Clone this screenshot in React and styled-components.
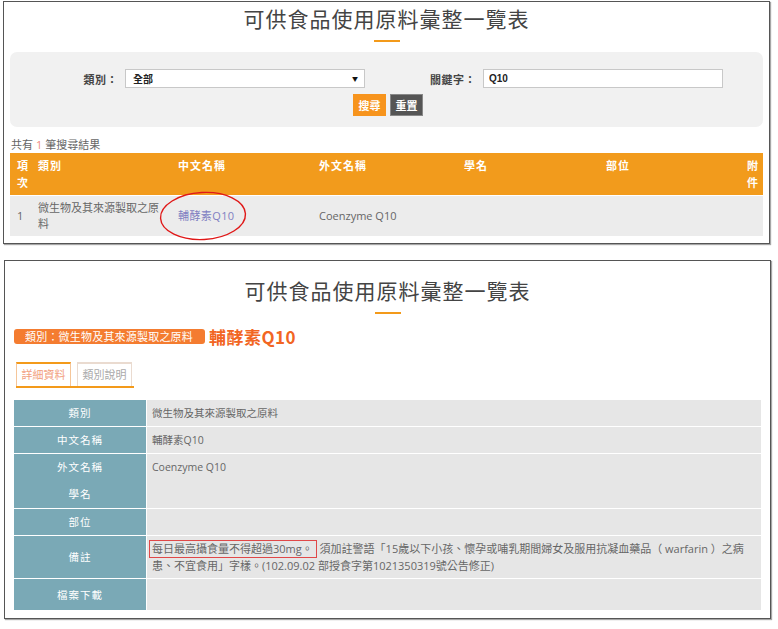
import React from "react";
import styled, { createGlobalStyle } from "styled-components";

const GlobalStyle = createGlobalStyle`
  body {
    margin: 0;
    background: #fff;
    font-family: "Open Sans", "Noto Sans CJK TC", sans-serif;
  }
`;

const Page = styled.div`
  display: flex;
  flex-direction: column;
  gap: 16px;
  padding: 1px 7px 8px 3px;
`;

const Panel = styled.div`
  width: 767px;
  box-sizing: border-box;
  border: 1px solid #555;
  box-shadow: 1px 1px 1px rgba(0, 0, 0, 0.35);
  background: #fff;
  margin-left: ${(p) => p.$shift || 0}px;
  padding: ${(p) => p.$pad};
`;

const Title = styled.h1`
  margin: 0;
  height: 30px;
  line-height: 30px;
  text-align: center;
  font-family: "Noto Sans CJK TC", sans-serif;
  font-weight: 400;
  font-size: 21px;
  letter-spacing: 1px;
  color: #444;
`;

const TitleBar = styled.div`
  width: 26px;
  height: 2px;
  background: #f39a1a;
  margin: 7px auto 0;
`;

const SearchBox = styled.div`
  margin-top: 10px;
  height: 75px;
  box-sizing: border-box;
  background: #f1f1f1;
  border-radius: 7px;
  padding-top: 17px;
`;

const FieldGrid = styled.div`
  display: grid;
  grid-template-columns: 115px 240px 118px 240px;
  align-items: center;
`;

const Label = styled.label`
  text-align: right;
  padding-right: 7px;
  font-size: 11px;
  font-weight: bold;
  color: #444;
  letter-spacing: 0.5px;
`;

const FakeSelect = styled.div`
  height: 19px;
  box-sizing: border-box;
  display: flex;
  align-items: center;
  justify-content: space-between;
  padding: 0 6px 0 7px;
  background: #fff;
  border: 1px solid #c8c8c8;
  font-size: 10px;
  font-weight: bold;
  color: #222;
`;

const Arrow = styled.span`
  font-size: 6px;
  color: #111;
`;

const TextInput = styled.input`
  height: 19px;
  box-sizing: border-box;
  border: 1px solid #c8c8c8;
  padding: 0 5px;
  font-family: "Liberation Sans", sans-serif;
  font-size: 10px;
  font-weight: bold;
  color: #222;
  outline: none;
`;

const ButtonRow = styled.div`
  display: flex;
  justify-content: center;
  gap: 4px;
  margin-top: 6px;
  padding-left: 3px;
`;

const Btn = styled.button`
  width: 33px;
  height: 22px;
  padding: 0;
  border: 1px solid ${(p) => (p.$dark ? "#888" : "#f7941d")};
  background: ${(p) => (p.$dark ? "#555" : "#f7941d")};
  color: #fff;
  font-family: "Noto Sans CJK TC", sans-serif;
  font-size: 11px;
  font-weight: bold;
`;

const ResultCount = styled.div`
  margin-top: 11px;
  height: 14px;
  line-height: 14px;
  font-size: 11px;
  color: #666;
  padding-left: 1px;

  b {
    font-weight: normal;
    color: #f08a80;
    margin: 0 3px;
  }
`;

const ResultTable = styled.table`
  margin-top: 1px;
  width: 100%;
  table-layout: fixed;
  border-collapse: collapse;
  font-size: 11px;

  th {
    background: #f29b1c;
    color: #fff;
    font-weight: bold;
    text-align: left;
    vertical-align: top;
    padding: 4px 7px;
    line-height: 17px;
    letter-spacing: 1px;
  }

  th:last-child {
    text-align: right;
  }

  td {
    background: #ececec;
    color: #666;
    vertical-align: middle;
    padding: 4px 7px;
    line-height: 16px;
    border-top: 1px solid #fff;
    height: 32px;
  }
`;

const LinkCell = styled.td`
  position: relative;
`;

const Link = styled.a`
  color: #7f7fc2;
  text-decoration: none;
  letter-spacing: 0.4px;
`;

const Ellipse = styled.svg`
  position: absolute;
  left: -12px;
  top: -6px;
  overflow: visible;
`;

const CategoryRow = styled.div`
  display: flex;
  align-items: center;
  gap: 4px;
  margin-top: 10px;
  height: 24px;
`;

const Badge = styled.span`
  background: #f47c30;
  color: #fff;
  border-radius: 3px;
  font-size: 11px;
  line-height: 15px;
  padding: 0 12px 0 11px;
  letter-spacing: 0.2px;
`;

const ItemName = styled.span`
  color: #f26522;
  font-size: 17px;
  font-weight: bold;
  font-family: "Noto Sans CJK TC", sans-serif;
  letter-spacing: 0.5px;
`;

const Tabs = styled.div`
  display: flex;
  gap: 6px;
  width: 118px;
  margin: 14px 0 0 2px;
  border-bottom: 2px solid #f39a1a;
`;

const Tab = styled.div`
  width: 55px;
  height: 24px;
  box-sizing: border-box;
  line-height: 22px;
  text-align: center;
  font-size: 11px;
  background: #fff;
  color: ${(p) => (p.$active ? "#f2a07e" : "#aaa")};
  border: 1px solid ${(p) => (p.$active ? "#f5c69a" : "#eadbd0")};
  border-top: 2px solid ${(p) => (p.$active ? "#f39a1a" : "#eadbd0")};
  border-bottom: none;
`;

const DetailTable = styled.table`
  margin-top: 12px;
  width: 100%;
  border-collapse: collapse;
  table-layout: fixed;
  font-size: 10.5px;

  th {
    width: 132px;
    background: #7aa9b6;
    color: #fff;
    font-weight: normal;
    letter-spacing: 1px;
    border-right: 1px solid #fff;
    border-bottom: 1px solid #fff;
    padding: 0;
  }

  td {
    background: #e6e6e6;
    color: #666;
    border-bottom: 1px solid #fff;
    padding: 0 5px;
  }

  tr:last-child th,
  tr:last-child td {
    border-bottom: none;
  }
`;

const DetailRow = styled.tr`
  height: ${(p) => p.$h}px;
`;

const StackLabel = styled.div`
  line-height: 27px;
`;

const TopCell = styled.td`
  vertical-align: top;
  line-height: 27px;
`;

const NoteCell = styled.td`
  font-size: 11px;
  line-height: 17px;
  padding: 4px 5px !important;
`;

const Boxed = styled.span`
  border: 1px solid #e04848;
  padding: 0 3px 1px 2px;
  margin-left: -3px;
`;

const results = [
  {
    no: 1,
    category: "微生物及其來源製取之原料",
    zh: "輔酵素Q10",
    en: "Coenzyme Q10",
  },
];

export default function App() {
  return (
    <>
      <GlobalStyle />
      <Page>
        <Panel $pad="1px 6px 7px">
          <Title>可供食品使用原料彙整一覽表</Title>
          <TitleBar />
          <SearchBox>
            <FieldGrid>
              <Label>類別：</Label>
              <FakeSelect>
                <span>全部</span>
                <Arrow>▼</Arrow>
              </FakeSelect>
              <Label>關鍵字：</Label>
              <TextInput defaultValue="Q10" />
            </FieldGrid>
            <ButtonRow>
              <Btn>搜尋</Btn>
              <Btn $dark>重置</Btn>
            </ButtonRow>
          </SearchBox>
          <ResultCount>
            共有<b>1</b>筆搜尋結果
          </ResultCount>
          <ResultTable>
            <colgroup>
              <col style={{ width: 21 }} />
              <col style={{ width: 140 }} />
              <col style={{ width: 141 }} />
              <col style={{ width: 145 }} />
              <col style={{ width: 142 }} />
              <col style={{ width: 141 }} />
              <col />
            </colgroup>
            <thead>
              <tr>
                <th>項次</th>
                <th>類別</th>
                <th>中文名稱</th>
                <th>外文名稱</th>
                <th>學名</th>
                <th>部位</th>
                <th>附件</th>
              </tr>
            </thead>
            <tbody>
              {results.map((r) => (
                <tr key={r.no}>
                  <td>{r.no}</td>
                  <td>{r.category}</td>
                  <LinkCell>
                    <Link href="#">{r.zh}</Link>
                    <Ellipse width="90" height="52" viewBox="0 0 90 52">
                      <ellipse
                        cx="44"
                        cy="26"
                        rx="42.5"
                        ry="23.5"
                        fill="none"
                        stroke="#e01818"
                        strokeWidth="1.4"
                        transform="rotate(-3 44 26)"
                      />
                    </Ellipse>
                  </LinkCell>
                  <td>{r.en}</td>
                  <td></td>
                  <td></td>
                  <td></td>
                </tr>
              ))}
            </tbody>
          </ResultTable>
        </Panel>

        <Panel $shift={1} $pad="14px 9px 8px">
          <Title>可供食品使用原料彙整一覽表</Title>
          <TitleBar />
          <CategoryRow>
            <Badge>類別：微生物及其來源製取之原料</Badge>
            <ItemName>輔酵素Q10</ItemName>
          </CategoryRow>
          <Tabs>
            <Tab $active>詳細資料</Tab>
            <Tab>類別說明</Tab>
          </Tabs>
          <DetailTable>
            <tbody>
              <DetailRow $h={26}>
                <th>類別</th>
                <td>微生物及其來源製取之原料</td>
              </DetailRow>
              <DetailRow $h={27}>
                <th>中文名稱</th>
                <td>輔酵素Q10</td>
              </DetailRow>
              <DetailRow $h={54}>
                <th>
                  <StackLabel>外文名稱</StackLabel>
                  <StackLabel>學名</StackLabel>
                </th>
                <TopCell>Coenzyme Q10</TopCell>
              </DetailRow>
              <DetailRow $h={27}>
                <th>部位</th>
                <td></td>
              </DetailRow>
              <DetailRow $h={43}>
                <th>備註</th>
                <NoteCell>
                  <Boxed>每日最高攝食量不得超過30mg。</Boxed> 須加註警語「15歲以下小孩、懷孕或哺乳期間婦女及服用抗凝血藥品（ warfarin ）之病
                  <br />
                  患、不宜食用」字樣。(102.09.02 部授食字第1021350319號公告修正)
                </NoteCell>
              </DetailRow>
              <DetailRow $h={32}>
                <th>檔案下載</th>
                <td></td>
              </DetailRow>
            </tbody>
          </DetailTable>
        </Panel>
      </Page>
    </>
  );
}
